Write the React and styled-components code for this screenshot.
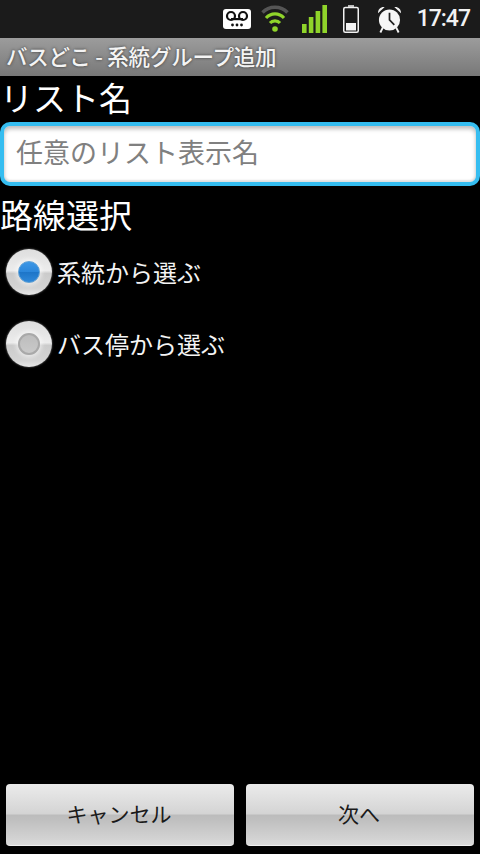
import React from "react";
import styled, { createGlobalStyle } from "styled-components";

const Global = createGlobalStyle`
  html, body { margin: 0; padding: 0; background: #000; }
  #root { width: 480px; height: 854px; overflow: hidden; }
  * { box-sizing: border-box; }
`;

const FONT = `"Noto Sans CJK JP", "Noto Sans", sans-serif`;

const Screen = styled.div`
  width: 480px;
  height: 854px;
  display: flex;
  flex-direction: column;
  background: #000;
  color: #fff;
  font-family: ${FONT};
`;

const StatusBar = styled.div`
  height: 38px;
  flex: none;
  background: #1b1b1b;
  display: flex;
  align-items: center;
  justify-content: flex-end;
  padding-right: 10px;
`;

const StatusIcon = styled.svg`
  display: block;
  flex: none;
  margin-right: ${(p) => p.$gap}px;
`;

const Clock = styled.span`
  font-family: Roboto, "Liberation Sans", sans-serif;
  font-size: 23px;
  font-weight: 500;
  letter-spacing: -1px;
  line-height: 38px;
  color: #f2f2f2;
`;

const TitleBar = styled.div`
  height: 38px;
  flex: none;
  background: linear-gradient(#9c9c9c, #787878);
  padding-left: 6px;
  font-size: 21.5px;
  font-weight: 500;
  line-height: 35px;
  letter-spacing: -0.2px;
  color: #f4f4f4;
  text-shadow: 0 0 3px #333;
  white-space: nowrap;
`;

const Content = styled.div`
  flex: 1;
  display: flex;
  flex-direction: column;
`;

const SectionLabel = styled.div`
  font-size: 33px;
  height: ${(p) => p.$height}px;
  line-height: 42px;
  margin-top: ${(p) => p.$top}px;
  color: #fff;
`;

const NameField = styled.div`
  height: 64px;
  background: #fff;
  border: 4px solid #35bdf0;
  border-radius: 10px;
  box-shadow: inset 0 3px 4px #bdbdbd, inset 0 -2px 2px #e2e2e2;
  padding-left: 12px;
  font-size: 27px;
  line-height: 52px;
  color: #808080;
  white-space: nowrap;
`;

const RadioGroup = styled.div`
  display: flex;
  flex-direction: column;
`;

const RadioRow = styled.div`
  height: 72px;
  display: flex;
  align-items: center;
  padding-left: 6px;
  font-size: 24px;
  line-height: 32px;
  color: #f4f4f4;
`;

const RadioLabel = styled.span`
  padding-bottom: 1px;
`;

const RadioCircle = styled.span`
  width: 46px;
  height: 46px;
  flex: none;
  margin-right: 5px;
  border-radius: 50%;
  background: linear-gradient(#dedede 0%, #ececec 47%, #cbcbcb 53%, #d4d4d4 85%, #e8e8e8 100%);
  box-shadow: 0 0 2px #888;
  display: flex;
  align-items: center;
  justify-content: center;
`;

const RadioDot = styled.span`
  width: 22px;
  height: 22px;
  border-radius: 50%;
  background: ${(p) =>
    p.$on
      ? "linear-gradient(#3d97e6 0%, #2b86da 50%, #1d75c8 51%, #2f88d8 100%)"
      : "linear-gradient(#bdbdbd, #c9c9c9)"};
  border: ${(p) => (p.$on ? "1px solid #5fa2d8" : "2px solid #a9a9a9")};
  box-shadow: 0 0 4px 2px rgba(255, 255, 255, 0.55);
`;

const ButtonBar = styled.div`
  flex: none;
  display: grid;
  grid-template-columns: 1fr 1fr;
  gap: 12px;
  padding: 0 6px 8px;
`;

const ActionButton = styled.div`
  height: 62px;
  border-radius: 4px;
  background: linear-gradient(#ebebeb 0%, #d4d4d4 49%, #bcbcbc 51%, #c0c0c0 60%, #d9d9d9 100%);
  border-bottom: 1px solid #f0f0f0;
  display: flex;
  align-items: center;
  justify-content: center;
  padding: 0 2px 4px 0;
  font-size: 21px;
  color: #1a1a1a;
`;

function VoicemailIcon() {
  return (
    <StatusIcon $gap={10} width="28" height="20" viewBox="0 0 28 20">
      <rect x="0" y="0" width="28" height="20" rx="3" fill="#fff" />
      <circle cx="8" cy="7" r="4" fill="none" stroke="#111" strokeWidth="2.2" />
      <circle cx="20" cy="7" r="4" fill="none" stroke="#111" strokeWidth="2.2" />
      <rect x="8" y="9" width="12" height="2.2" fill="#111" />
      <circle cx="9.5" cy="16" r="1.4" fill="#111" />
      <circle cx="14" cy="16" r="1.4" fill="#111" />
      <circle cx="18.5" cy="16" r="1.4" fill="#111" />
    </StatusIcon>
  );
}

function WifiIcon() {
  return (
    <StatusIcon $gap={13} width="28" height="28" viewBox="0 0 28 28" fill="none">
      <path d="M1.5 7.5 C8 0.5 20 0.5 26.5 7.5" stroke="#555" strokeWidth="3.4" />
      <path d="M5 13 C10 7.5 18 7.5 23 13" stroke="#8fd42a" strokeWidth="3.2" />
      <path d="M9 18 C11.5 15.2 16.5 15.2 19 18" stroke="#8fd42a" strokeWidth="3.2" />
      <circle cx="14" cy="24" r="2.8" fill="#8fd42a" />
    </StatusIcon>
  );
}

function SignalIcon() {
  return (
    <StatusIcon $gap={16} width="25" height="28" viewBox="0 0 25 28" fill="#8fd42a">
      <rect x="0" y="19" width="4.6" height="9" />
      <rect x="6.8" y="12" width="4.6" height="16" />
      <rect x="13.6" y="6" width="4.6" height="22" />
      <rect x="20.4" y="0" width="4.6" height="28" />
    </StatusIcon>
  );
}

function BatteryIcon() {
  return (
    <StatusIcon $gap={18} width="16" height="28" viewBox="0 0 16 28">
      <rect x="5" y="0" width="6" height="2.5" fill="#bbb" />
      <rect x="0.75" y="2.5" width="14.5" height="24.75" rx="1.5" fill="none" stroke="#f2f2f2" strokeWidth="1.5" />
      <rect x="3" y="18" width="10" height="7.5" fill="#f4f4f4" />
    </StatusIcon>
  );
}

function AlarmIcon() {
  return (
    <StatusIcon $gap={15} width="25" height="29" viewBox="0 0 26 29">
      <path d="M1 8 C1 3.5 4 1 8 1.5 Z" fill="#f4f4f4" />
      <path d="M25 8 C25 3.5 22 1 18 1.5 Z" fill="#f4f4f4" />
      <path d="M6 23 L3.5 28 M20 23 L22.5 28" stroke="#f4f4f4" strokeWidth="2" />
      <circle cx="13" cy="15" r="11" fill="#f6f6f6" />
      <path d="M13 7.5 V15 L18 20" fill="none" stroke="#222" strokeWidth="1.8" />
    </StatusIcon>
  );
}

export default function App() {
  return (
    <Screen>
      <Global />
      <StatusBar>
        <VoicemailIcon />
        <WifiIcon />
        <SignalIcon />
        <BatteryIcon />
        <AlarmIcon />
        <Clock>17:47</Clock>
      </StatusBar>
      <TitleBar>バスどこ - 系統グループ追加</TitleBar>
      <Content>
        <SectionLabel $top={0} $height={46}>リスト名</SectionLabel>
        <NameField>任意のリスト表示名</NameField>
        <SectionLabel $top={7} $height={43}>路線選択</SectionLabel>
        <RadioGroup>
          <RadioRow>
            <RadioCircle><RadioDot $on /></RadioCircle>
            <RadioLabel>系統から選ぶ</RadioLabel>
          </RadioRow>
          <RadioRow>
            <RadioCircle><RadioDot /></RadioCircle>
            <RadioLabel>バス停から選ぶ</RadioLabel>
          </RadioRow>
        </RadioGroup>
      </Content>
      <ButtonBar>
        <ActionButton>キャンセル</ActionButton>
        <ActionButton>次へ</ActionButton>
      </ButtonBar>
    </Screen>
  );
}
